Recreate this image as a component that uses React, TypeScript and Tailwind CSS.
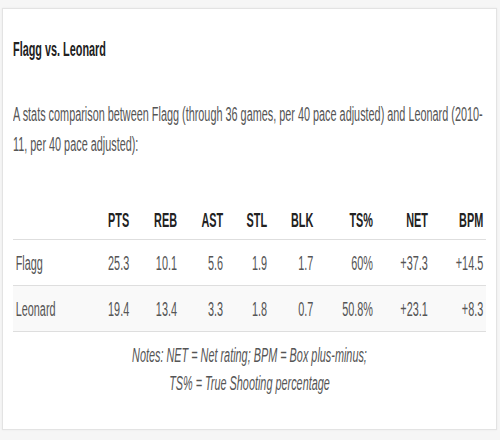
import React from "react";

const cols = ["PTS", "REB", "AST", "STL", "BLK", "TS%", "NET", "BPM"];

const rows = [
  { name: "Flagg", stats: ["25.3", "10.1", "5.6", "1.9", "1.7", "60%", "+37.3", "+14.5"] },
  { name: "Leonard", stats: ["19.4", "13.4", "3.3", "1.8", "0.7", "50.8%", "+23.1", "+8.3"] },
];

const grid = "grid grid-cols-[159px_60px_88px_85px_81px_85px_110px_101px_102px]";

export default function App() {
  return (
    <div className="w-[500px] h-[440px] bg-[#f6f6f6] pt-[8px] pl-[2px] font-['Liberation_Sans',Arial,sans-serif]">
      <div className="w-[495px] bg-white border border-[#e3e3e3] px-[10px] pt-[26px] pb-[32px] overflow-hidden shadow-[0_0_2px_rgba(0,0,0,0.06)]">
        {/* the screenshot is squeezed sideways, so the content is laid out wide and scaled */}
        <div className="w-[871px] origin-left scale-x-[0.543]">
          <h3 className="text-[20px] leading-[28px] font-bold text-[#222]">Flagg vs. Leonard</h3>

          <p className="mt-[36px] text-[20px] leading-[30px] text-[#555]">
            <span className="block whitespace-nowrap">
              A stats comparison between Flagg (through 36 games, per 40 pace adjusted) and Leonard (2010-
            </span>
            <span className="block whitespace-nowrap">11, per 40 pace adjusted):</span>
          </p>

          <div className="mt-[47px] text-[20px] leading-[28px]">
            <div className={`${grid} pb-[5px] border-b border-[#dedede] font-bold text-[#222]`}>
              <div />
              {cols.map((c) => (
                <div key={c} className="text-right pr-[5px]">{c}</div>
              ))}
            </div>
            {rows.map((r, i) => (
              <div
                key={r.name}
                className={`${grid} pt-[9px] pb-[8px] border-b border-[#dedede] text-[#555] ${i % 2 ? "bg-[#f9f9f9]" : ""}`}
              >
                <div className="pl-[5px]">{r.name}</div>
                {r.stats.map((s, j) => (
                  <div key={j} className="text-right pr-[5px]">{s}</div>
                ))}
              </div>
            ))}
          </div>

          <div className="mt-[9px] text-center italic text-[20px] leading-[28px] text-[#555]">
            <div>Notes: NET = Net rating; BPM = Box plus-minus;</div>
            <div>TS% = True Shooting percentage</div>
          </div>
        </div>
      </div>
    </div>
  );
}
